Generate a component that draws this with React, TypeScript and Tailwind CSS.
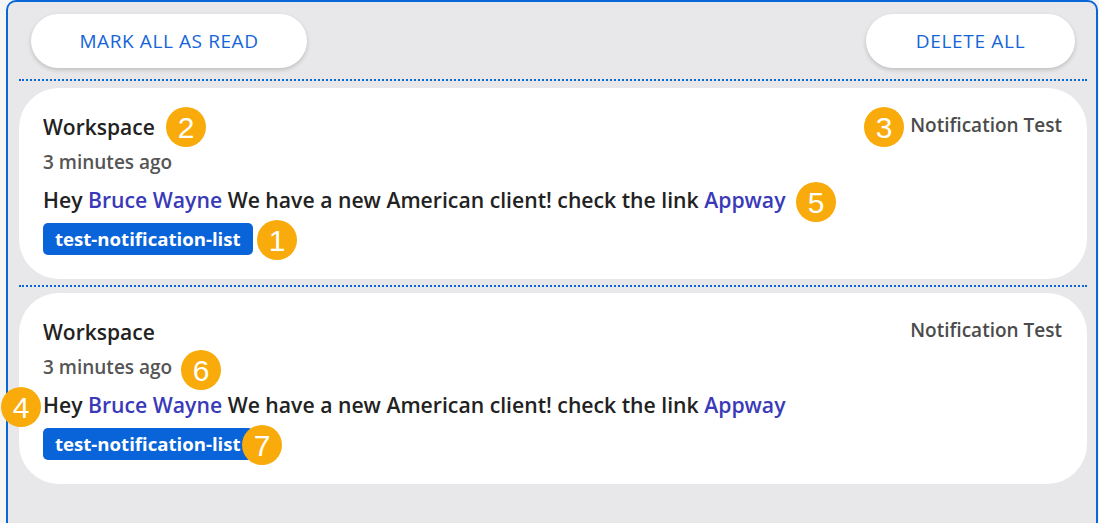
const font = { fontFamily: '"Open Sans", "Noto Sans", sans-serif' };

interface Notification {
  id: number;
  workspace: string;
  time: string;
  name: string;
  link: string;
  tag: string;
  source: string;
}

const notifications: Notification[] = [
  {
    id: 1,
    workspace: 'Workspace',
    time: '3 minutes ago',
    name: 'Bruce Wayne',
    link: 'Appway',
    tag: 'test-notification-list',
    source: 'Notification Test',
  },
  {
    id: 2,
    workspace: 'Workspace',
    time: '3 minutes ago',
    name: 'Bruce Wayne',
    link: 'Appway',
    tag: 'test-notification-list',
    source: 'Notification Test',
  },
];

const markers = [
  { n: 1, cls: 'left-[257px] top-[220px]' },
  { n: 2, cls: 'left-[166px] top-[107px]' },
  { n: 3, cls: 'left-[864px] top-[107px]' },
  { n: 4, cls: 'left-[1px] top-[387px]' },
  { n: 5, cls: 'left-[796px] top-[182px]' },
  { n: 6, cls: 'left-[181px] top-[350px]' },
  { n: 7, cls: 'left-[242px] top-[425px]' },
];

function Card({ item }: { item: Notification }) {
  return (
    <div className="bg-white rounded-[40px] pl-[24px] pr-[25px] pt-[28px] pb-[24px]">
      <div className="flex justify-between h-[24px] items-center">
        <span className="text-[21px] font-semibold text-[#222] whitespace-nowrap">{item.workspace}</span>
        <span className="text-[19px] font-semibold text-[#4b4b4b] -mt-[5px]">{item.source}</span>
      </div>
      <div className="mt-[10px] h-[24px] flex items-center text-[19px] font-semibold text-[#555]">
        {item.time}
      </div>
      <div className="mt-[14px] h-[24px] flex items-center text-[21.2px] font-semibold text-[#222] whitespace-nowrap">
        Hey&nbsp;<a className="text-[#3a3ab8]" href="#">{item.name}</a>&nbsp;We have a new American client! check the link&nbsp;
        <a className="text-[#3a3ab8]" href="#">{item.link}</a>
      </div>
      <div className="mt-[11px] flex">
        <span className="h-[32px] px-[12px] flex items-center rounded-[5px] bg-[#0a64d9] text-white text-[18.6px] font-bold">
          {item.tag}
        </span>
      </div>
    </div>
  );
}

export default function App() {
  return (
    <div className="relative w-[1099px] h-[523px] bg-[#f3f5f5] pl-[6px] pr-[1px] overflow-hidden" style={font}>
      <div className="h-full border-2 border-b-0 border-[#0a66d8] rounded-t-[10px] bg-[#e8e8ea] pl-[11px] pr-[9px]">
        <div className="flex justify-between px-[12px] pt-[12px]">
          <button className="w-[276px] h-[54px] rounded-full bg-white text-[#1565d8] text-[19px] tracking-[0.6px] shadow-[0_2px_4px_rgba(0,0,0,0.18)]">
            MARK ALL AS READ
          </button>
          <button className="w-[209px] h-[54px] rounded-full bg-white text-[#1565d8] text-[19px] tracking-[0.7px] shadow-[0_2px_4px_rgba(0,0,0,0.18)]">
            DELETE ALL
          </button>
        </div>
        <div className="mt-[11px] border-t-2 border-dotted border-[#0a66d8]" />
        {notifications.map((item, i) => (
          <div key={item.id}>
            {i > 0 && <div className="mt-[6px] border-t-2 border-dotted border-[#0a66d8]" />}
            <div className={i > 0 ? 'mt-[6px]' : 'mt-[7px]'}>
              <Card item={item} />
            </div>
          </div>
        ))}
      </div>
      {markers.map((m) => (
        <div
          key={m.n}
          className={`absolute ${m.cls} w-[40px] h-[40px] rounded-full bg-[#f8ab0a] text-white flex items-center justify-center text-[30px]`}
          style={{ fontFamily: '"Liberation Sans", Arial, sans-serif' }}
        >
          {m.n}
        </div>
      ))}
    </div>
  );
}
